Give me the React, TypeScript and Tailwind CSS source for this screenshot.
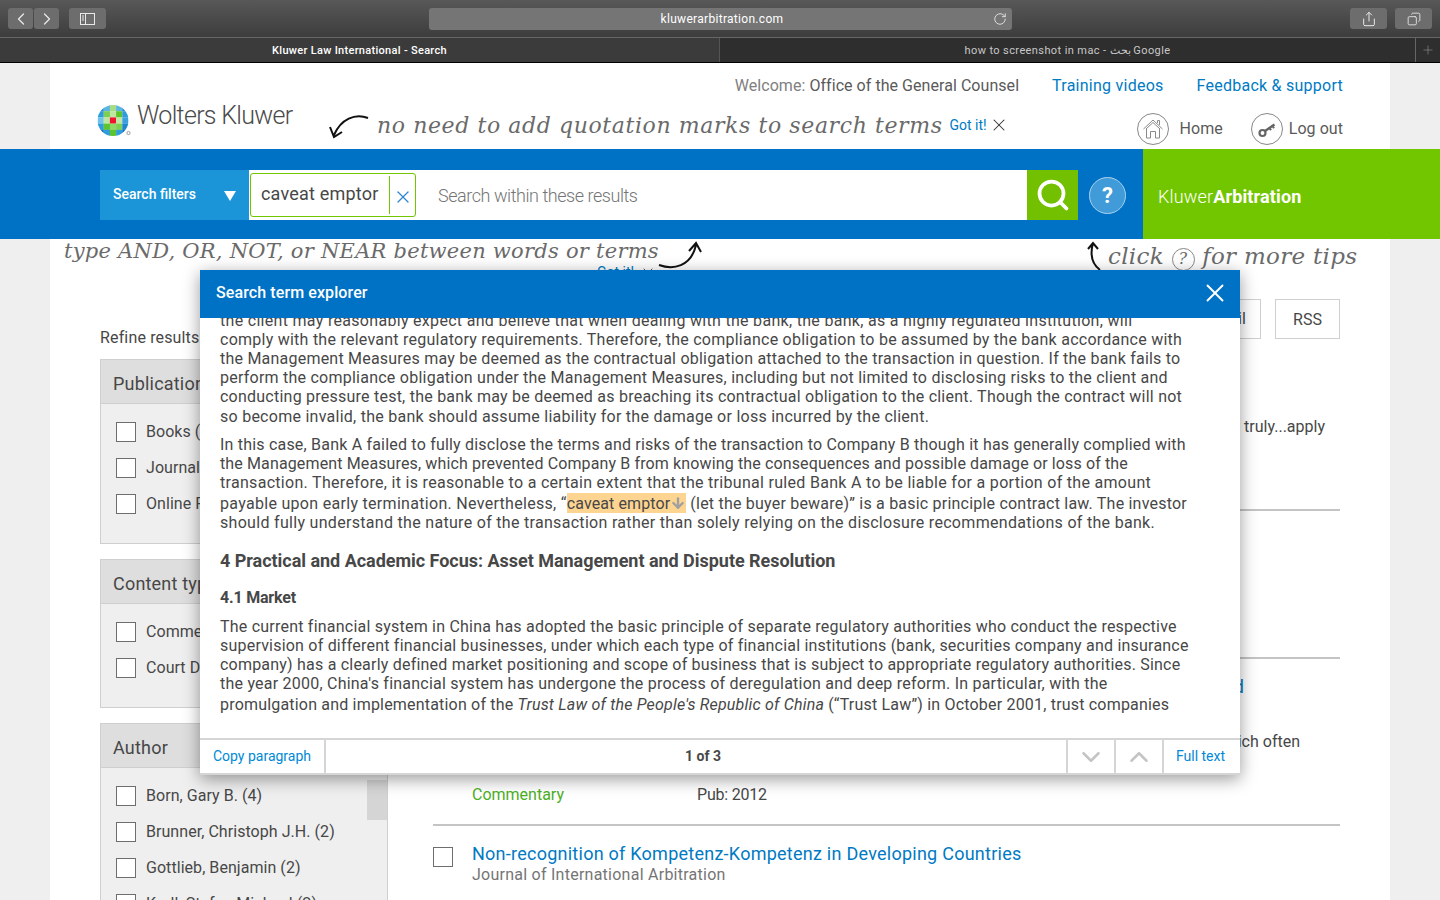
import React from 'react';
import { ArrowDown, ChevronDown, ChevronLeft, ChevronRight, ChevronUp, Copy, Plus, RotateCw, Search, Share, X } from 'lucide-react';

const PUBLICATION = ['Books (1,204)', 'Journals (812)', 'Online Resources (96)'];
const CONTENT_TYPE = ['Commentary (420)', 'Court Decisions (310)'];
const AUTHORS = ['Born, Gary B. (4)', 'Brunner, Christoph J.H. (2)', 'Gottlieb, Benjamin (2)', 'Kroll, Stefan Michael (2)'];

const LOGO_GRID = [
  ['#1c86cf', '#5db5e2', '#a5dc86', '#5db5e2', '#1c86cf'],
  ['#2f9ddc', '#7ccf52', '#bfe6a3', '#5cc42c', '#2f9ddc'],
  ['#6fc3e8', '#bfe6a3', '#f0142d', '#bfe6a3', '#3aa0de'],
  ['#2f9ddc', '#5cc42c', '#8ed86a', '#7ccf52', '#1c86cf'],
  ['#0b6fb8', '#2f9ddc', '#5cc42c', '#2f9ddc', '#0b6fb8'],
];

function Logo() {
  return (
    <svg width="34" height="32" viewBox="0 0 34 32" className="shrink-0">
      <defs>
        <clipPath id="wk-clip">
          <circle cx="16" cy="15.5" r="15.5" />
        </clipPath>
      </defs>
      <g clipPath="url(#wk-clip)">
        {LOGO_GRID.map((row, y) =>
          row.map((c, x) => <rect key={`${x}-${y}`} x={0.5 + x * 6.2} y={y * 6.2} width="6.3" height="6.3" fill={c} />)
        )}
      </g>
      <circle cx="31.5" cy="28" r="1.6" fill="none" stroke="#777" strokeWidth="0.7" />
    </svg>
  );
}

function HomeIcon() {
  return (
    <svg width="22" height="22" viewBox="0 0 22 22" fill="none" stroke="#8a8a8a" strokeWidth="1">
      <path d="M1.5 11 11 2l9.5 9M4 11 11 4.5 18 11M4.5 10.5V20h4v-6.5h5V20h4v-9.5M15.5 5V2.5h2v4.5" />
    </svg>
  );
}

function KeyIcon() {
  return (
    <svg width="20" height="20" viewBox="0 0 20 20" fill="none" stroke="#666">
      <circle cx="5.5" cy="14" r="3" strokeWidth="2.2" />
      <path d="M8 12 17.5 5.5" strokeWidth="2.4" />
      <path d="M12.5 9l1.5 2.2M15.5 7l1.5 2.2" strokeWidth="2" />
    </svg>
  );
}

function ToolButton({ className, children }: { className: string; children: React.ReactNode }) {
  return <div className={`h-[21px] rounded-[3px] bg-[#6d6d6d] flex items-center justify-center text-[#e8e8e8] ${className}`}>{children}</div>;
}

function BrowserChrome() {
  return (
    <div className="shrink-0">
      <div className="h-[38px] bg-gradient-to-b from-[#585858] to-[#3d3d3d] border-b border-[#666] flex items-center pl-2 pr-2">
        <ToolButton className="w-[25px]"><ChevronLeft size={20} strokeWidth={1.5} /></ToolButton>
        <ToolButton className="w-[25px] ml-[1px]"><ChevronRight size={20} strokeWidth={1.5} /></ToolButton>
        <ToolButton className="w-[37px] ml-[10px]">
          <svg width="15" height="12" viewBox="0 0 15 12" fill="none" stroke="#e8e8e8">
            <rect x="0.5" y="0.5" width="14" height="11" />
            <path d="M5.5 0.5v11M2 3h2M2 5h2M2 7h2" />
          </svg>
        </ToolButton>
        <div className="relative ml-[323px] w-[583px] h-[22px] rounded-[3px] bg-[#757575] flex items-center justify-center text-white text-[12px] tracking-[0.3px] pt-[1px] pl-[3px]">
          kluwerarbitration.com
          <RotateCw size={14} strokeWidth={1.5} className="absolute right-[5px] text-[#e8e8e8]" />
        </div>
        <ToolButton className="w-[37px] ml-auto"><Share size={16} strokeWidth={1.5} /></ToolButton>
        <ToolButton className="w-[37px] ml-2"><Copy size={14} strokeWidth={1.5} className="-scale-x-100" /></ToolButton>
      </div>
      <div className="h-[25px] bg-[#3b3b3b] border-b border-black flex text-[11px] leading-[25px] text-center">
        <div className="w-[719px] text-white font-medium tracking-[0.3px]">Kluwer Law International - Search</div>
        <div className="flex-1 bg-[#2e2e2e] border-l border-[#555] text-[#c8c8c8] tracking-[0.4px]">how to screenshot in mac - بحث Google</div>
        <div className="w-[25px] bg-[#2e2e2e] border-l border-[#666] flex items-center justify-center text-[#999]"><Plus size={14} strokeWidth={1} /></div>
      </div>
    </div>
  );
}

function Hand({ className, children }: { className?: string; children: React.ReactNode }) {
  return <span className={`font-['DejaVu_Serif',serif] italic font-light text-[#6a6a6a] whitespace-nowrap ${className ?? ''}`}>{children}</span>;
}

function Header() {
  return (
    <div className="relative h-[86px] px-[47px] bg-white">
      <div className="flex justify-end items-center pt-[13px] text-[16px] leading-[20px] whitespace-nowrap">
        <span className="text-[#5a5a5a] tracking-[0.05px]"><span className="text-[#808080]">Welcome:</span> Office of the General Counsel</span>
        <a className="ml-[33px] text-[#007ac3] tracking-[0.25px]">Training videos</a>
        <a className="ml-[33px] text-[#007ac3] tracking-[0.25px]">Feedback &amp; support</a>
      </div>
      <div className="flex items-center h-[50px]">
        <Logo />
        <span className="ml-[6px] text-[25px] text-[#4a4a4a] tracking-[-0.7px] font-light -mt-[11px] w-[154px] whitespace-nowrap">Wolters Kluwer</span>
        <svg width="44" height="30" viewBox="0 0 44 30" fill="none" stroke="#111" strokeWidth="2" className="ml-[36px] mt-[9px] shrink-0">
          <path d="M41 7C28 2 14 8 7 24M3 16l4 10 8-5" />
        </svg>
        <Hand className="ml-[6px] text-[22px] tracking-[0.6px] mt-[8px]">no need to add quotation marks to search terms</Hand>
        <a className="ml-[7px] text-[14px] text-[#007ac3] mt-[8px]">Got it!</a>
        <X size={20} strokeWidth={1.25} className="ml-[2px] text-[#333] mt-[8px]" />
        <div className="ml-auto flex items-center text-[16px] text-[#5a5a5a] mt-[16px] tracking-[0.05px]">
          <span className="w-[32px] h-[32px] rounded-full border border-[#888] flex items-center justify-center"><HomeIcon /></span>
          <span className="ml-[11px]">Home</span>
          <span className="ml-[28px] w-[32px] h-[32px] rounded-full border border-[#888] flex items-center justify-center"><KeyIcon /></span>
          <span className="ml-[6px]">Log out</span>
        </div>
      </div>
    </div>
  );
}

function SearchBar() {
  return (
    <div className="h-[90px] -mx-[50px] flex bg-[#0072c6]">
      <div className="w-[1143px] pl-[100px] pt-[21px] flex items-start">
        <div className="w-[149px] h-[50px] bg-[#1c95d8] flex items-center justify-between px-[13px] pb-[2px] text-white text-[14px] font-medium">
          Search filters
          <span className="w-0 h-0 border-l-[6px] border-r-[6px] border-t-[10px] border-l-transparent border-r-transparent border-t-white mt-[4px]" />
        </div>
        <div className="w-[778px] h-[50px] bg-white flex items-center">
          <div className="ml-[1px] h-[44px] w-[166px] border border-[#72c600] rounded-[3px] flex items-center">
            <span className="flex-1 pl-[10px] pb-[3px] text-[18px] text-[#474747] whitespace-nowrap tracking-[0.2px]">caveat emptor</span>
            <span className="h-[38px] w-[26px] border-l border-[#72c600] flex items-center justify-center text-[#2f86d0] pt-[4px]"><X size={20} strokeWidth={1.5} /></span>
          </div>
          <span className="ml-[22px] text-[18px] text-[#757575] font-light tracking-[-0.45px]">Search within these results</span>
        </div>
        <div className="w-[51px] h-[50px] bg-[#72c000] flex items-center justify-center text-white"><Search size={36} strokeWidth={2.5} /></div>
        <div className="ml-[11px] mt-[7px] w-[37px] h-[37px] rounded-full bg-[#419bd9] border border-[#a9d2ee] flex items-center justify-center text-white text-[22px] font-bold">?</div>
      </div>
      <div className="flex-1 bg-[#72c600] flex items-center pl-[15px] text-white text-[18px] tracking-[0.15px] pt-[4px]">
        <span className="font-light">Kluwer</span><span className="font-bold">Arbitration</span>
      </div>
    </div>
  );
}

function Checkbox() {
  return <span className="w-[20px] h-[20px] shrink-0 border border-[#6e6e6e] bg-white" />;
}

function FilterBox({ title, items, height, scroll }: { title: string; items: string[]; height: string; scroll?: boolean }) {
  return (
    <div className={`relative border border-[#cfcfcf] bg-[#efefef] ${height}`}>
      <div className="h-[44px] bg-[#dedede] border-b border-[#cfcfcf] pl-[12px] pt-[3px] flex items-center text-[18px] text-[#474747] tracking-[0.2px]">{title}</div>
      <div className="pt-[10px] pl-[15px] flex flex-col text-[16px] text-[#474747] tracking-[0.05px]">
        {items.map((item) => (
          <div key={item} className="h-[36px] flex items-center gap-[10px] whitespace-nowrap">
            <Checkbox />
            {item}
          </div>
        ))}
      </div>
      {scroll && <div className="absolute right-0 top-[56px] w-[20px] h-[40px] bg-[#d5d5d5]" />}
    </div>
  );
}

function Sidebar() {
  return (
    <aside className="w-[288px] shrink-0 pt-[87px]">
      <div className="h-[33px] text-[16px] text-[#474747] tracking-[0.15px]">Refine results by</div>
      <FilterBox title="Publication" items={PUBLICATION} height="h-[185px]" />
      <div className="h-[15px]" />
      <FilterBox title="Content type" items={CONTENT_TYPE} height="h-[149px]" />
      <div className="h-[15px]" />
      <FilterBox title="Author" items={AUTHORS} height="h-[300px]" scroll />
    </aside>
  );
}

function Results() {
  return (
    <main className="flex-1 ml-[45px] pt-[60px] text-[16px] text-[#474747]">
      <div className="flex justify-end gap-[14px] h-[40px]">
        <span className="w-[70px] h-[40px] border border-[#cfcfcf] flex items-center justify-center">Email</span>
        <span className="w-[65px] h-[40px] border border-[#cfcfcf] flex items-center justify-center pt-[1px]">RSS</span>
      </div>
      <div className="h-[172px] border-b-2 border-[#c4c4c4] pt-[76px] pr-[15px] text-right">an award which is truly...apply</div>
      <div className="h-[148px] border-b-2 border-[#c4c4c4]" />
      <div className="h-[167px] border-b-2 border-[#c4c4c4] relative">
        <a className="absolute right-[96px] top-[14px] text-[18px] text-[#007ac3]">d</a>
        <span className="absolute right-[40px] top-[71px]">which often</span>
        <div className="absolute left-[39px] top-[124px] flex">
          <span className="w-[225px] text-[#4caf1f]">Commentary</span>
          <span className="tracking-[-0.2px]">Pub: 2012</span>
        </div>
      </div>
      <div className="flex gap-[19px] pt-[17px]">
        <span className="flex mt-[4px] shrink-0"><Checkbox /></span>
        <div>
          <a className="block text-[18px] leading-[22px] text-[#007ac3] tracking-[0.25px]">Non-recognition of Kompetenz-Kompetenz in Developing Countries</a>
          <span className="block leading-[20px] text-[#757575] tracking-[0.25px]">Journal of International Arbitration</span>
        </div>
      </div>
    </main>
  );
}

function TermExplorer() {
  return (
    <div className="absolute left-[200px] top-[270px] w-[1040px] h-[505px] bg-white flex flex-col shadow-[0_4px_16px_rgba(0,0,0,0.4)]">
      <div className="h-[48px] shrink-0 bg-[#0072c6] flex items-center justify-between pl-[16px] pr-[10px] pb-[2px] text-white text-[16px] font-medium tracking-[0.1px]">
        Search term explorer
        <X size={30} strokeWidth={1.5} />
      </div>
      <div className="flex-1 overflow-hidden px-[20px] text-[16px] leading-[19.2px] text-[#474747] whitespace-nowrap">
        <div className="-mt-[7.5px]">
          <span className="block tracking-[0.305px]">the client may reasonably expect and believe that when dealing with the bank, the bank, as a highly regulated institution, will</span>
          <span className="block tracking-[0.25px]">comply with the relevant regulatory requirements. Therefore, the compliance obligation to be assumed by the bank accordance with</span>
          <span className="block tracking-[0.22px]">the Management Measures may be deemed as the contractual obligation attached to the transaction in question. If the bank fails to</span>
          <span className="block tracking-[0.24px]">perform the compliance obligation under the Management Measures, including but not limited to disclosing risks to the client and</span>
          <span className="block tracking-[0.235px]">conducting pressure test, the bank may be deemed as breaching its contractual obligation to the client. Though the contract will not</span>
          <span className="block tracking-[0.26px]">so become invalid, the bank should assume liability for the damage or loss incurred by the client.</span>
        </div>
        <div className="mt-[9px]">
          <span className="block tracking-[0.2px]">In this case, Bank A failed to fully disclose the terms and risks of the transaction to Company B though it has generally complied with</span>
          <span className="block tracking-[0.13px]">the Management Measures, which prevented Company B from knowing the consequences and possible damage or loss of the</span>
          <span className="block tracking-[0.3px]">transaction. Therefore, it is reasonable to a certain extent that the tribunal ruled Bank A to be liable for a portion of the amount</span>
          <span className="block tracking-[0.21px] mt-[1px]">
            <span className="tracking-[0.3px]">payable upon early termination. Nevertheless, “</span><mark className="inline-flex items-center h-[20px] align-bottom bg-[#fdd591] text-[#474747] tracking-[0.1px]">caveat emptor<ArrowDown size={16} strokeWidth={3.5} className="text-[#a0a0a0]" /></mark> (let the buyer beware)” is a basic principle contract law. The investor
          </span>
          <span className="block tracking-[0.305px]">should fully understand the nature of the transaction rather than solely relying on the disclosure recommendations of the bank.</span>
        </div>
        <h3 className="mt-[17px] text-[18px] leading-[22px] font-bold tracking-[-0.03px]">4 Practical and Academic Focus: Asset Management and Dispute Resolution</h3>
        <h4 className="mt-[16px] font-bold tracking-[-0.2px]">4.1 Market</h4>
        <div className="mt-[10px]">
          <span className="block tracking-[0.22px]">The current financial system in China has adopted the basic principle of separate regulatory authorities who conduct the respective</span>
          <span className="block tracking-[0.21px]">supervision of different financial businesses, under which each type of financial institutions (bank, securities company and insurance</span>
          <span className="block tracking-[0.21px]">company) has a clearly defined market positioning and scope of business that is subject to appropriate regulatory authorities. Since</span>
          <span className="block tracking-[0.225px]">the year 2000, China's financial system has undergone the process of deregulation and deep reform. In particular, with the</span>
          <span className="block tracking-[0.19px] mt-[1px]">promulgation and implementation of the <i>Trust Law of the People's Republic of China</i> (“Trust Law”) in October 2001, trust companies</span>
        </div>
      </div>
      <div className="h-[37px] shrink-0 border-y-2 border-[#d5d5d5] flex items-stretch text-[14px] text-[#0089d6]">
        <span className="w-[126px] border-r-2 border-[#d5d5d5] flex items-center justify-center">Copy paragraph</span>
        <span className="flex-1 flex items-center justify-center pl-[14px] font-bold text-[#474747]">1 of 3</span>
        <span className="w-[48px] border-l-2 border-[#d5d5d5] flex items-center justify-center text-[#c4c4c4]"><ChevronDown size={30} strokeWidth={2} /></span>
        <span className="w-[48px] border-l-2 border-[#d5d5d5] flex items-center justify-center text-[#c4c4c4]"><ChevronUp size={30} strokeWidth={2} /></span>
        <span className="w-[78px] border-l-2 border-[#d5d5d5] flex items-center justify-center pr-[3px]">Full text</span>
      </div>
    </div>
  );
}

export default function App() {
  return (
    <div className="relative w-[1440px] h-[900px] overflow-hidden flex flex-col bg-[#efefef] font-['Roboto',sans-serif]">
      <BrowserChrome />
      <div className="mx-[50px] flex-1 bg-white">
        <Header />
        <SearchBar />
        <div className="flex px-[50px]">
          <Sidebar />
          <Results />
        </div>
      </div>

      {/* Hand-written hints that sit over the page */}
      <Hand className="absolute left-[64px] top-[236px] text-[21px] tracking-[0.25px]">type AND, OR, NOT, or NEAR between words or terms</Hand>
      <svg width="46" height="32" viewBox="0 0 46 32" fill="none" stroke="#111" strokeWidth="2" className="absolute left-[658px] top-[240px]">
        <path d="M1 25c14 5 32 2 37-20M31 11l7-8 5 9" />
      </svg>
      <span className="absolute left-[597px] top-[262px] flex items-center gap-[6px] text-[14px] text-[#007ac3]">Got it! <X size={16} strokeWidth={1.25} className="text-[#333]" /></span>
      <svg width="20" height="32" viewBox="0 0 20 32" fill="none" stroke="#111" strokeWidth="2" className="absolute left-[1086px] top-[240px]">
        <path d="M14 30C6 24 4 14 7 3M2 9l5-6 5 6" />
      </svg>
      <Hand className="absolute left-[1108px] top-[239px] text-[23px] tracking-[0.3px]">
        click <span className="inline-flex w-[23px] h-[23px] rounded-full border border-[#888] items-center justify-center text-[16px]">?</span> for more tips
      </Hand>

      <TermExplorer />
    </div>
  );
}
